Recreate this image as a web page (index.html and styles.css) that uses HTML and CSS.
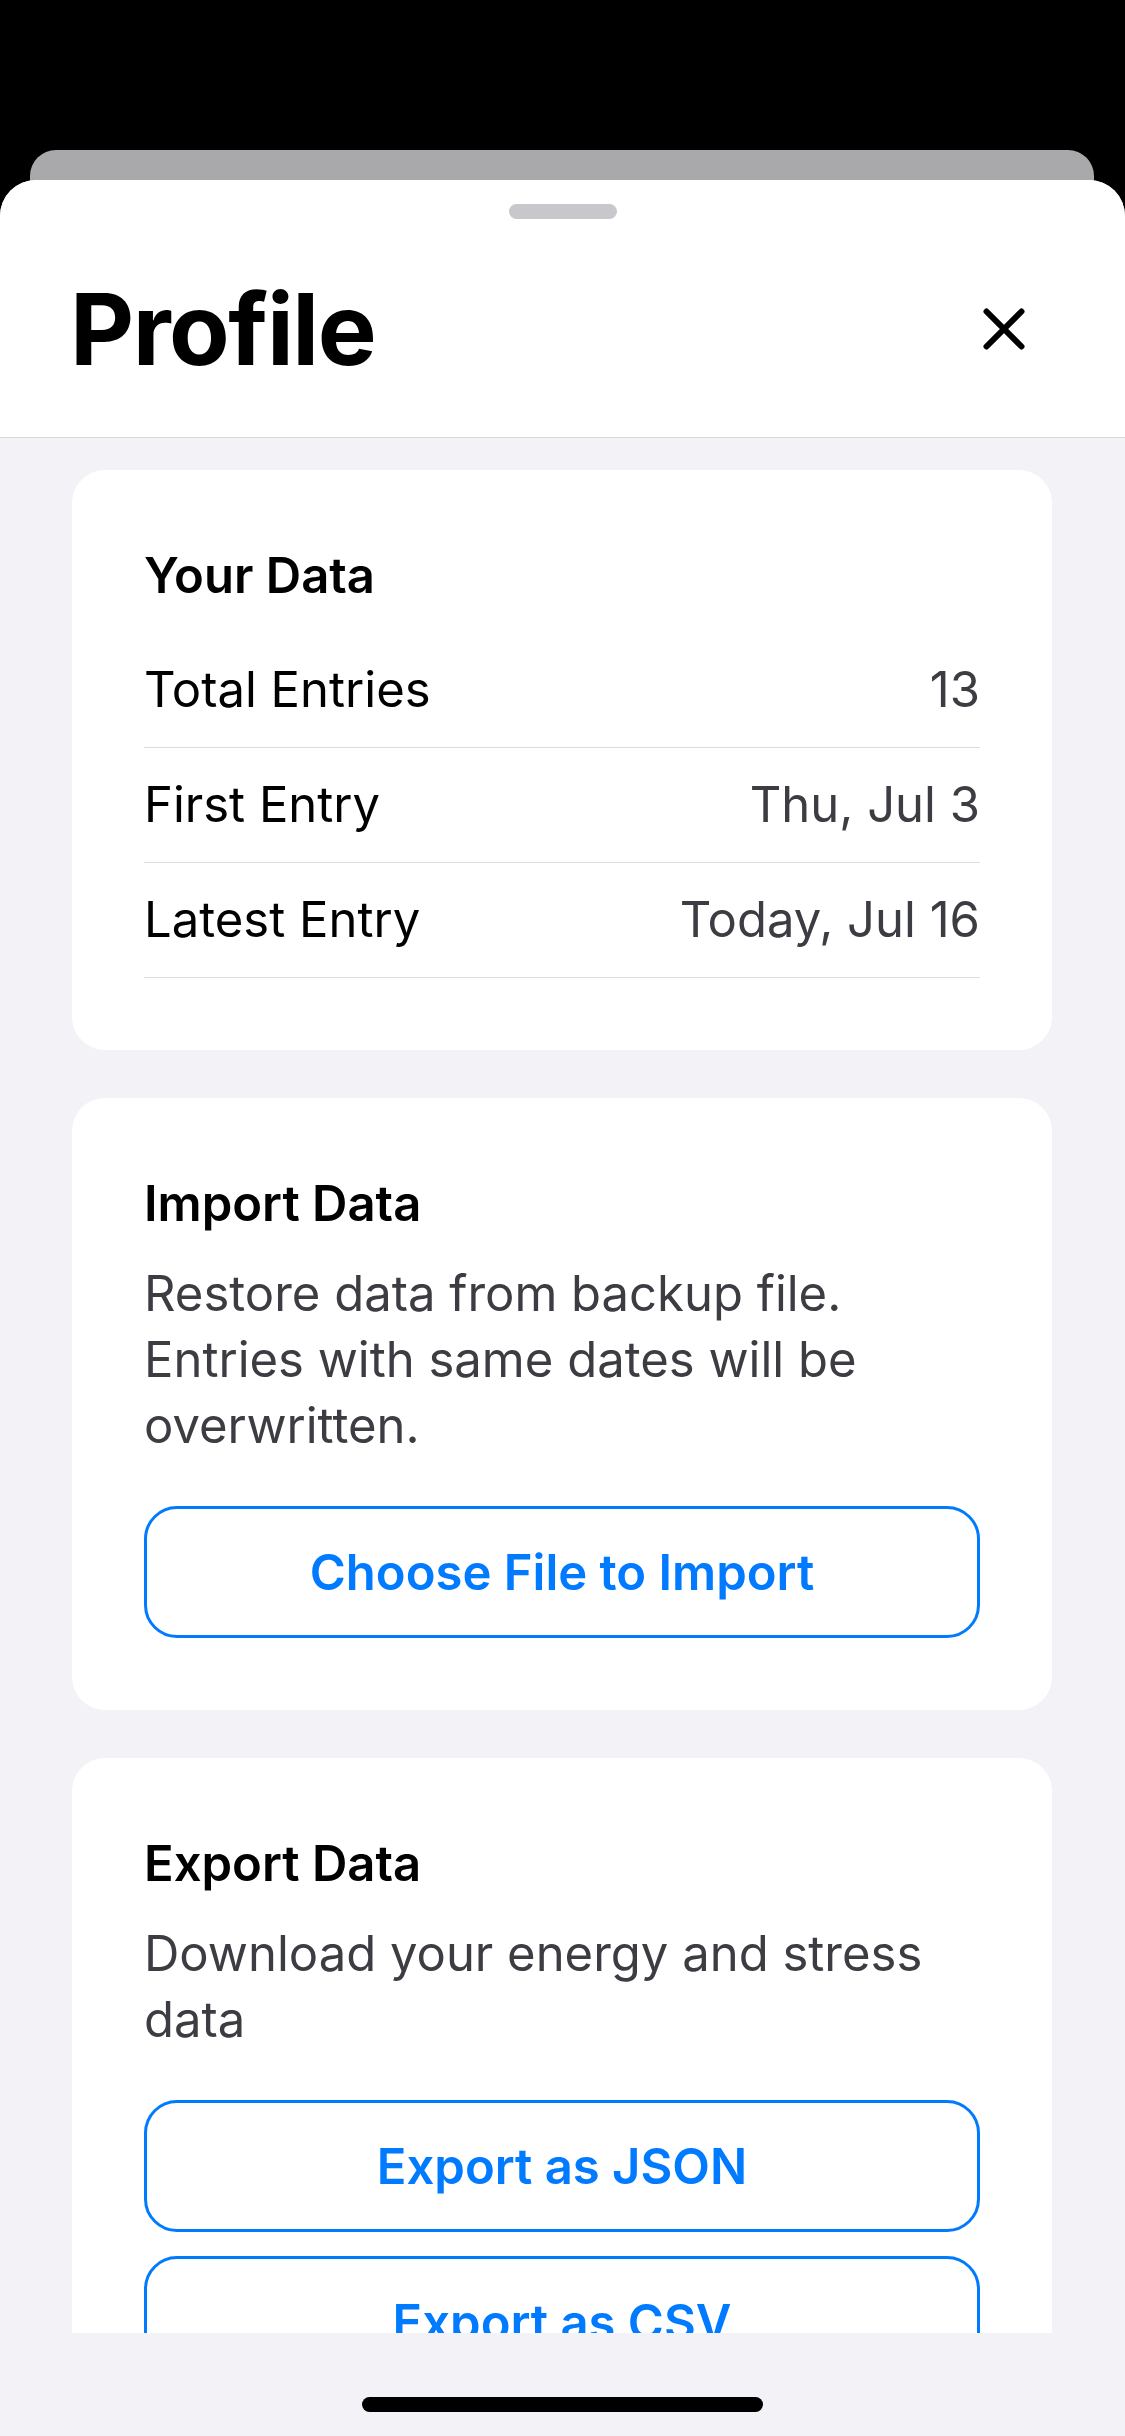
FILE: index.html
```html
<!DOCTYPE html>
<html lang="en">
<head>
<meta charset="utf-8">
<title>Profile</title>
<link rel="stylesheet" href="styles.css">
</head>
<body>
<div class="screen">
  <div class="back-card"></div>
  <div class="sheet">
    <header class="sheet-header">
      <div class="grabber"></div>
      <div class="title-row">
        <h1 class="title">Profile</h1>
        <button class="close" aria-label="Close">
          <svg width="44" height="44" viewBox="0 0 44 44"><path d="M4.5 4.5 L39.5 39.5 M39.5 4.5 L4.5 39.5" stroke="#000" stroke-width="6" stroke-linecap="round" fill="none"/></svg>
        </button>
      </div>
    </header>
    <main class="scroll">
      <section class="card">
        <h2 class="card-title">Your Data</h2>
        <div class="row"><span class="label">Total Entries</span><span class="value">13</span></div>
        <div class="row"><span class="label">First Entry</span><span class="value">Thu, Jul 3</span></div>
        <div class="row"><span class="label">Latest Entry</span><span class="value">Today, Jul 16</span></div>
      </section>
      <section class="card">
        <h2 class="card-title">Import Data</h2>
        <p class="desc">Restore data from backup file. Entries with same dates will be overwritten.</p>
        <button class="outline-btn">Choose File to Import</button>
      </section>
      <section class="card">
        <h2 class="card-title">Export Data</h2>
        <p class="desc">Download your energy and stress data</p>
        <button class="outline-btn">Export as JSON</button>
        <button class="outline-btn second">Export as CSV</button>
      </section>
    </main>
    <footer class="home-area">
      <div class="home-indicator"></div>
    </footer>
  </div>
</div>
</body>
</html>
```
FILE: styles.css
```css
* { box-sizing: border-box; }
html, body {
  margin: 0;
  padding: 0;
  background: #000;
  font-family: "Inter", "Roboto", "Liberation Sans", sans-serif;
}
.screen {
  position: relative;
  width: 1125px;
  height: 2436px;
  overflow: hidden;
  padding-top: 180px;
}
.back-card {
  position: absolute;
  left: 30px;
  right: 31px;
  top: 150px;
  height: 80px;
  background: #a9a9ab;
  border-radius: 26px 26px 0 0;
}
.sheet {
  position: relative;
  height: 2256px;
  background: #f2f2f7;
  border-radius: 36px 36px 0 0;
  overflow: hidden;
  display: flex;
  flex-direction: column;
}
.sheet-header {
  background: #fff;
  padding-top: 24px;
  padding-bottom: 57px;
  border-bottom: 1px solid #d8d8dc;
  flex: none;
}
.grabber {
  width: 108px;
  height: 15px;
  border-radius: 8px;
  background: #c7c7cc;
  margin: 0 auto;
}
.title-row {
  margin-top: 59px;
  height: 102px;
  display: flex;
  align-items: center;
  justify-content: space-between;
  padding: 0 99px 0 70px;
}
.title {
  margin: 0;
  font-size: 99px;
  line-height: 102px;
  font-weight: 700;
  letter-spacing: -1.5px;
  color: #000;
}
.close {
  width: 44px;
  height: 44px;
  padding: 0;
  border: 0;
  background: none;
  display: block;
}
.close svg { display: block; }
.scroll {
  flex: 1;
  overflow: hidden;
  padding: 32px 73px 0 72px;
  display: flex;
  flex-direction: column;
  gap: 48px;
}
.card {
  background: #fff;
  border-radius: 33px;
  padding: 78px 72px 72px;
  flex: none;
}
.card-title {
  margin: 0 0 29px;
  font-size: 49px;
  line-height: 56px;
  font-weight: 600;
  color: #000;
}
.row {
  display: flex;
  justify-content: space-between;
  padding: 29px 0;
  line-height: 56px;
  font-size: 49px;
  border-bottom: 1px solid #dcdce0;
}
.label { color: #000; }
.value { color: #3c3c43; }
.desc {
  margin: 0 0 47px;
  font-size: 49px;
  line-height: 66px;
  color: #3c3c43;
}
.outline-btn {
  display: block;
  width: 100%;
  height: 132px;
  border: 3px solid #007aff;
  border-radius: 33px;
  background: #fff;
  color: #007aff;
  font-family: inherit;
  font-size: 49px;
  font-weight: 600;
  padding: 0;
}
.outline-btn.second { margin-top: 24px; }
.home-area {
  flex: none;
  height: 103px;
  background: #f2f2f7;
  position: relative;
}
.home-indicator {
  width: 401px;
  height: 15px;
  border-radius: 8px;
  background: #000;
  margin: 64px auto 0;
}
```
